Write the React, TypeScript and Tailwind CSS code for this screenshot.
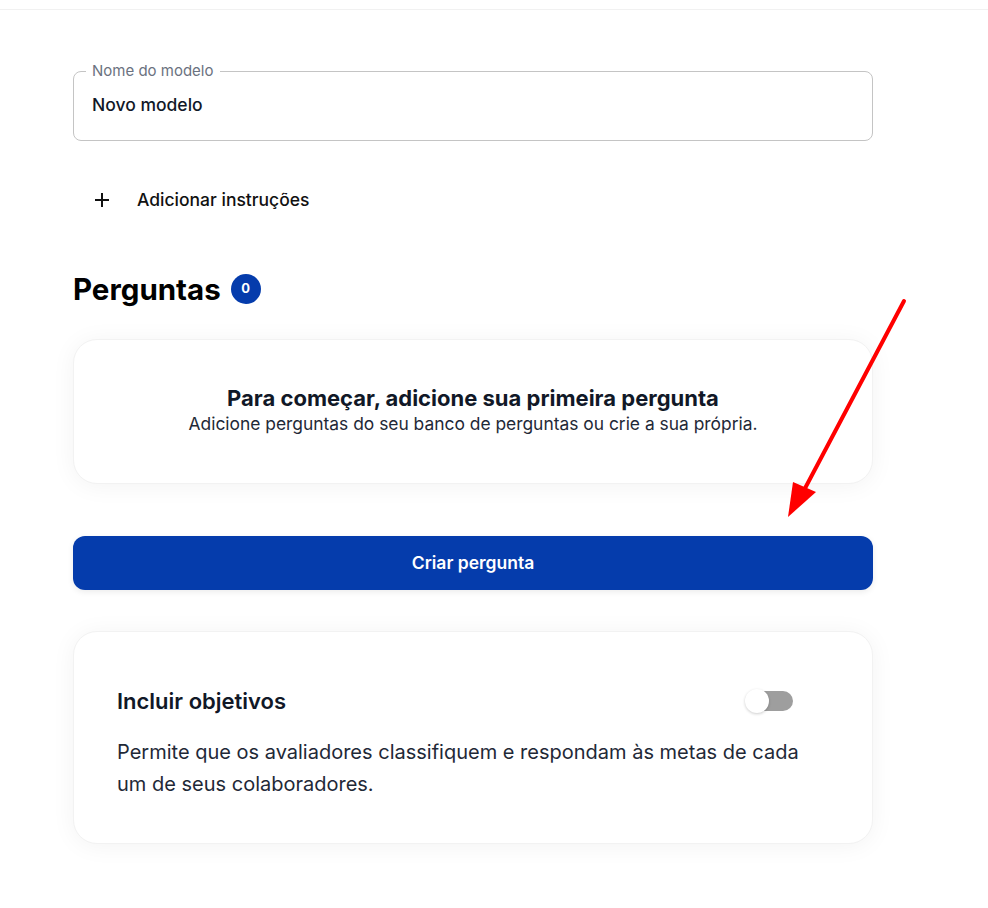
import { useState } from "react";

function PlusIcon() {
  return (
    <svg width="16" height="16" viewBox="0 0 16 16" fill="none" stroke="#111111" strokeWidth="2">
      <path d="M8 1v14M1 8h14" />
    </svg>
  );
}

function Toggle({ on, onChange }: { on: boolean; onChange: () => void }) {
  return (
    <button
      type="button"
      role="switch"
      aria-checked={on}
      onClick={onChange}
      className="relative flex h-[28px] w-[52px] items-center"
    >
      <span className="ml-[10px] h-[20px] w-[40px] rounded-full bg-[#9e9e9e]" />
      <span className="absolute left-[2px] top-[2px] h-[24px] w-[24px] rounded-full bg-white shadow-[0_1px_3px_rgba(0,0,0,0.2)]" />
    </button>
  );
}

export default function App() {
  const [objectives, setObjectives] = useState(false);

  return (
    <div
      className="relative min-h-[908px] bg-white text-[#111827]"
      style={{ fontFamily: "Inter, 'Noto Sans', sans-serif" }}
    >
      {/* top bar edge */}
      <div className="h-[10px] border-b border-[#f1f1f1]" />

      <div className="ml-[73px] w-[800px] pt-[51px]">
        <fieldset className="rounded-lg border border-[#c4c4c4] px-[18px] pb-[23px]">
          <legend className="-ml-1.5 px-1.5 text-[15px] leading-5 text-[#6b7280]">Nome do modelo</legend>
          <div className="pt-3 text-[17.5px] font-medium leading-6 text-[#111827]">Novo modelo</div>
        </fieldset>

        <button type="button" className="mt-[42px] flex h-[34px] items-center pl-[21px]">
          <PlusIcon />
          <span className="ml-[27px] text-[17.5px] font-medium leading-6 text-[#111111]">
            Adicionar instruções
          </span>
        </button>

        <div className="mt-[54px] flex items-center gap-2.5">
          <h2 className="text-[29.5px] font-bold leading-9 text-black">Perguntas</h2>
          <span className="flex h-[30px] w-[30px] items-center justify-center rounded-full bg-[#053cac] text-[13px] font-bold text-white">
            0
          </span>
        </div>

        <div className="mt-[32px] flex h-[145px] flex-col items-center justify-center rounded-3xl border border-[#f2f2f2] bg-white pb-1 shadow-[0_2px_24px_rgba(0,0,0,0.05)]">
          <p className="text-[22px] font-bold leading-7 text-[#111827]">
            Para começar, adicione sua primeira pergunta
          </p>
          <p className="text-[17.4px] leading-6 text-[#1f2937]">
            Adicione perguntas do seu banco de perguntas ou crie a sua própria.
          </p>
        </div>

        <button
          type="button"
          className="mt-[52px] flex h-[54px] w-full items-center justify-center rounded-xl bg-[#053cac] text-[17.5px] font-semibold text-white shadow-[0_2px_6px_rgba(0,0,0,0.08)]"
        >
          Criar pergunta
        </button>

        <div className="mt-[41px] rounded-3xl border border-[#f2f2f2] bg-white px-[43px] pb-[43px] pt-[43px] shadow-[0_2px_24px_rgba(0,0,0,0.05)]">
          <div className="flex h-[52px] items-center justify-between pr-[34px]">
            <h3 className="text-[22px] font-semibold leading-7 text-[#111827]">Incluir objetivos</h3>
            <Toggle on={objectives} onChange={() => setObjectives((v) => !v)} />
          </div>
          <p className="mt-[9px] text-[20px] leading-8 text-[#1f2937]">
            Permite que os avaliadores classifiquem e respondam às metas de cada um de seus colaboradores.
          </p>
        </div>
      </div>

      {/* annotation arrow */}
      <svg className="pointer-events-none absolute left-0 top-0" width="988" height="908">
        <line x1="904" y1="301" x2="802" y2="494" stroke="#ff0000" strokeWidth="4" strokeLinecap="round" />
        <polygon points="788,517 793,482 816,492" fill="#ff0000" />
      </svg>
    </div>
  );
}
